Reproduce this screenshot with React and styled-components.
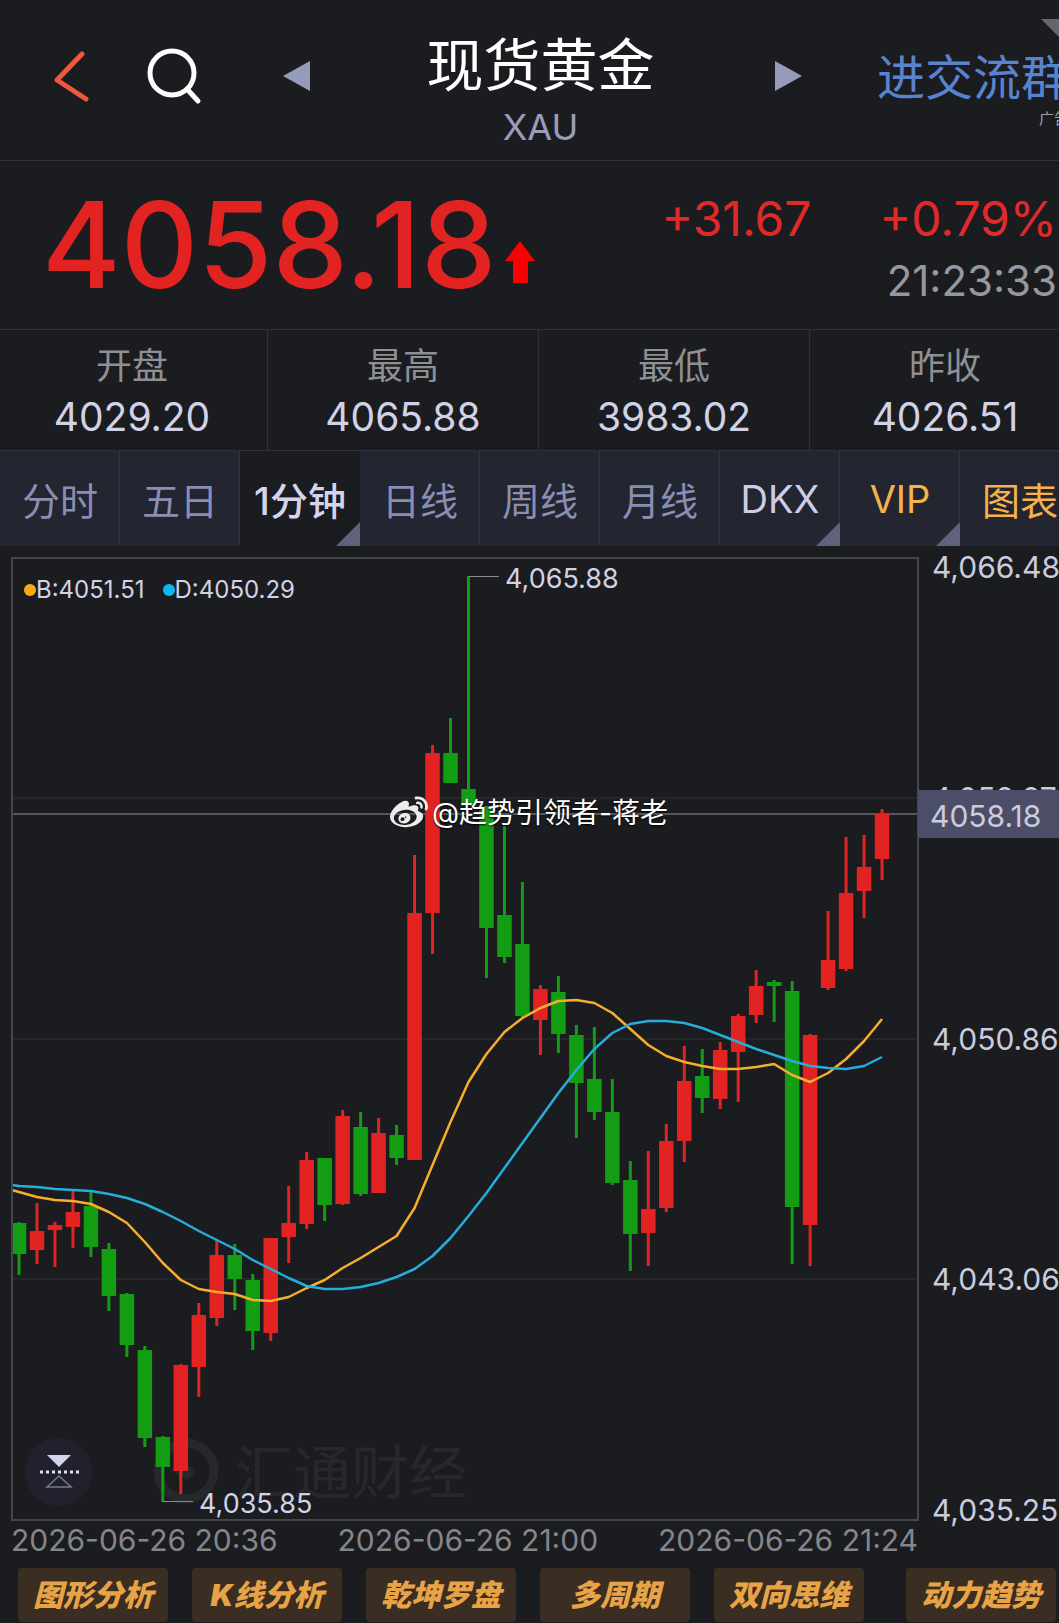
import React, { useState } from 'react';
import styled, { createGlobalStyle } from 'styled-components';
import { FaWeibo } from 'react-icons/fa';

const stats = [
  { label: '开盘', value: '4029.20' },
  { label: '最高', value: '4065.88' },
  { label: '最低', value: '3983.02' },
  { label: '昨收', value: '4026.51' },
];

const tabs = [
  { name: '分时' },
  { name: '五日' },
  { name: '1分钟', more: true },
  { name: '日线' },
  { name: '周线' },
  { name: '月线' },
  { name: 'DKX', more: true, color: '#cdcde6' },
  { name: 'VIP', more: true, color: '#f6b24c' },
  { name: '图表', color: '#f6b24c' },
];

const tools = ['图形分析', 'K线分析', '乾坤罗盘', '多周期', '双向思维', '动力趋势'];

const ticks = [
  { label: '4,066.48', y: 567 },
  { label: '4,058.67', y: 798, line: true },
  { label: '4,050.86', y: 1039, line: true },
  { label: '4,043.06', y: 1279, line: true },
  { label: '4,035.25', y: 1510 },
];

/* [up, high, body top, body bottom, low] */
const candles = [
  [0, 1222, 1223, 1254, 1275],
  [1, 1203, 1231, 1250, 1264],
  [1, 1222, 1225, 1230, 1267],
  [1, 1191, 1212, 1227, 1248],
  [0, 1192, 1206, 1247, 1257],
  [0, 1243, 1249, 1296, 1311],
  [0, 1293, 1294, 1345, 1357],
  [0, 1346, 1350, 1438, 1447],
  [0, 1436, 1437, 1467, 1502],
  [1, 1364, 1365, 1471, 1494],
  [1, 1303, 1315, 1367, 1397],
  [1, 1239, 1255, 1318, 1326],
  [0, 1244, 1255, 1279, 1310],
  [0, 1274, 1280, 1331, 1350],
  [1, 1238, 1238, 1333, 1341],
  [1, 1186, 1223, 1237, 1263],
  [1, 1152, 1160, 1224, 1229],
  [0, 1158, 1158, 1205, 1221],
  [1, 1110, 1116, 1204, 1205],
  [0, 1112, 1127, 1194, 1196],
  [1, 1118, 1133, 1193, 1193],
  [0, 1125, 1135, 1158, 1165],
  [1, 855, 913, 1160, 1160],
  [1, 745, 753, 913, 954],
  [0, 718, 753, 783, 783],
  [0, 576, 789, 806, 806],
  [0, 806, 807, 928, 978],
  [0, 826, 915, 957, 963],
  [0, 882, 944, 1016, 1017],
  [1, 985, 989, 1020, 1055],
  [0, 976, 992, 1034, 1053],
  [0, 1025, 1035, 1083, 1138],
  [0, 1027, 1079, 1112, 1120],
  [0, 1079, 1112, 1183, 1185],
  [0, 1161, 1180, 1234, 1271],
  [1, 1151, 1209, 1233, 1266],
  [1, 1124, 1141, 1208, 1212],
  [1, 1046, 1081, 1141, 1162],
  [0, 1049, 1076, 1098, 1113],
  [1, 1042, 1050, 1099, 1109],
  [1, 1014, 1016, 1052, 1102],
  [1, 970, 986, 1015, 1023],
  [0, 980, 982, 986, 1022],
  [0, 981, 991, 1207, 1264],
  [1, 1034, 1035, 1225, 1266],
  [1, 911, 960, 988, 990],
  [1, 837, 893, 969, 971],
  [1, 835, 867, 891, 918],
  [1, 809, 814, 859, 880],
];

const lineB = [
  1192, 1197, 1200, 1201, 1204, 1212, 1223, 1242, 1263, 1280, 1289, 1292, 1294,
  1300, 1301, 1297, 1288, 1280, 1268, 1258, 1247, 1236, 1208, 1165, 1122, 1082,
  1054, 1032, 1018, 1008, 1001, 1000, 1003, 1013, 1029, 1045, 1056, 1062, 1066,
  1069, 1069, 1067, 1064, 1075, 1082, 1073, 1059, 1041, 1019,
];

const lineD = [
  1186, 1187, 1189, 1190, 1191, 1194, 1198, 1204, 1212, 1221, 1231, 1240, 1249,
  1260, 1269, 1278, 1286, 1289, 1289, 1287, 1283, 1277, 1269, 1256, 1238, 1216,
  1193, 1168, 1143, 1118, 1093, 1070, 1049, 1033, 1024, 1021, 1021, 1023, 1028,
  1035, 1042, 1049, 1055, 1061, 1066, 1068, 1069, 1066, 1057,
];

const STEP = 17.98;
const getX = index => 19 + index * STEP;
const getPoints = (line, startY) =>
  `12,${startY} ${line.map((y, i) => `${getX(i)},${y}`).join(' ')}`;

const PriceChart = () => (
  <ChartSvg viewBox="11 557 1048 964" role="img" aria-label="XAU 1分钟">
    <g stroke="#303135" strokeWidth="1">
      {ticks
        .filter(tick => tick.line)
        .map(tick => (
          <line key={tick.label} x1="13" x2="917" y1={tick.y} y2={tick.y} />
        ))}
    </g>
    {/* 背景水印 */}
    <g>
      <circle cx="186" cy="1471" r="28" fill="none" stroke="#27282c" strokeWidth="9" />
      <path d="M170 1470l14-9 12 10-9 9z" fill="#27282c" />
      <Brand x="235" y="1494">
        汇通财经
      </Brand>
    </g>
    <line x1="13" x2="917" y1="814" y2="814" stroke="#55565b" strokeWidth="2" />
    {candles.map(([up, high, top, bottom, low], i) => (
      <g key={getX(i)} fill={up ? '#e32322' : '#129d12'}>
        <rect x={getX(i) - 1.5} y={high} width="3" height={low - high} />
        <rect x={getX(i) - 7.25} y={top} width="14.5" height={bottom - top} />
      </g>
    ))}
    <g fill="none" strokeWidth="2.5" strokeLinejoin="round">
      <polyline points={getPoints(lineB, 1190)} stroke="#f8ae2b" />
      <polyline points={getPoints(lineD, 1185)} stroke="#25aedb" />
    </g>
    <g stroke="#8b8c92" strokeWidth="1">
      <line x1="469" x2="499" y1="576.5" y2="576.5" />
      <line x1="163" x2="193" y1="1501.5" y2="1501.5" />
    </g>
    <Callout x="505" y="588">
      4,065.88
    </Callout>
    <Callout x="199" y="1513">
      4,035.85
    </Callout>
    <rect x="12" y="558" width="906" height="962" fill="none" stroke="#45464b" strokeWidth="2" />
    {ticks.map(tick => (
      <AxisText key={tick.label} x="932" y={tick.y + 11}>
        {tick.label}
      </AxisText>
    ))}
    <rect x="918" y="790" width="141" height="48" fill="#4b4e66" />
    <AxisText x="930" y="827">
      4058.18
    </AxisText>
  </ChartSvg>
);

const App = () => {
  const [active, setActive] = useState('1分钟');

  return (
    <>
      <GlobalStyle />
      <Page>
        <Header>
          <HeaderLeft>
            <BackButton aria-label="返回">
              <svg width="40" height="62" viewBox="0 0 40 62">
                <path
                  d="M33 9L8 35L37 54"
                  fill="none"
                  stroke="#f0573c"
                  strokeWidth="5"
                  strokeLinecap="round"
                  strokeLinejoin="round"
                />
              </svg>
            </BackButton>
            <SearchButton aria-label="搜索">
              <svg width="60" height="60" viewBox="0 0 60 60" fill="none" stroke="#fff" strokeWidth="5">
                <circle cx="27" cy="27" r="22" />
                <path d="M42 43L53 55" strokeLinecap="round" />
              </svg>
            </SearchButton>
            <IconButton aria-label="上一个">
              <svg width="28" height="32" viewBox="0 0 28 32">
                <path d="M0 16L27 1V31Z" fill="#969bbb" />
              </svg>
            </IconButton>
          </HeaderLeft>
          <TitleBox>
            <Title>现货黄金</Title>
            <Code>XAU</Code>
          </TitleBox>
          <HeaderRight>
            <IconButton aria-label="下一个">
              <svg width="28" height="32" viewBox="0 0 28 32">
                <path d="M27 16L0 1V31Z" fill="#969bbb" />
              </svg>
            </IconButton>
            <GroupLink href="#group">
              进交流群
              <AdText>广告</AdText>
            </GroupLink>
          </HeaderRight>
          <Corner />
        </Header>

        <Quote>
          <Price>
            4058.18
            <svg width="30" height="44" viewBox="0 0 30 44">
              <path d="M15 0L30 20H23V42H8V20H0Z" fill="#fb0000" />
            </svg>
          </Price>
          <Change>+31.67</Change>
          <ChangeBox>
            <Change>+0.79%</Change>
            <Time>21:23:33</Time>
          </ChangeBox>
        </Quote>

        <Stats>
          {stats.map(stat => (
            <Stat key={stat.label}>
              <StatLabel>{stat.label}</StatLabel>
              <StatValue>{stat.value}</StatValue>
            </Stat>
          ))}
        </Stats>

        <Tabs>
          {tabs.map(tab => (
            <Tab
              key={tab.name}
              $active={tab.name === active}
              $more={tab.more}
              $color={tab.color}
              onClick={() => setActive(tab.name)}
            >
              {tab.name}
            </Tab>
          ))}
        </Tabs>

        <ChartWrap>
          <PriceChart />
          <Legend>
            <LegendItem $color="#fbab10">B:4051.51</LegendItem>
            <LegendItem $color="#0fb7f2">D:4050.29</LegendItem>
          </Legend>
          <Author>
            <FaWeibo size={38} />
            @趋势引领者-蒋老
          </Author>
          <FoldButton aria-label="展开副图">
            <svg width="40" height="36" viewBox="0 0 40 36">
              <path d="M8 1H32L20 13Z" fill="#d3d3ec" />
              <path d="M1 18H40" stroke="#e2e2f2" strokeWidth="3" strokeDasharray="3 3" />
              <path d="M20 22L32 33H8Z" fill="none" stroke="#77788a" strokeWidth="1.5" />
            </svg>
          </FoldButton>
        </ChartWrap>

        <Dates>
          <span>2026-06-26 20:36</span>
          <span>2026-06-26 21:00</span>
          <span>2026-06-26 21:24</span>
        </Dates>

        <Tools>
          {tools.map(tool => (
            <Tool key={tool}>{tool}</Tool>
          ))}
        </Tools>
      </Page>
    </>
  );
};

const GlobalStyle = createGlobalStyle`
  * {
    box-sizing: border-box;
  }
  body {
    margin: 0;
    background-color: #1b1c20;
    font-family: Inter, 'Noto Sans CJK SC', sans-serif;
  }
  h1, p {
    margin: 0;
    font-weight: 400;
  }
  svg {
    display: block;
  }
`;
const BaseButton = styled.button`
  padding: 0;
  border: 0;
  background: none;
  font-family: inherit;
  cursor: pointer;
`;
const Page = styled.div`
  width: 100%;
  overflow: hidden;
  color: #d2d2e6;
`;
const Header = styled.header`
  position: relative;
  display: grid;
  grid-template-columns: 1fr auto 1fr;
  height: 161px;
  margin-right: -22px;
  border-bottom: 1px solid #303136;
`;
const HeaderLeft = styled.div`
  display: flex;
  align-items: flex-start;
  padding: 45px 0 0 49px;
`;
const HeaderRight = styled.div`
  display: flex;
  align-items: flex-start;
  justify-content: flex-end;
  gap: 74px;
  padding: 45px 12px 0 0;
`;
const IconButton = styled(BaseButton)`
  display: flex;
  align-items: center;
  flex-shrink: 0;
  height: 62px;
`;
const BackButton = styled(IconButton)`
  margin-right: 56px;
`;
const SearchButton = styled(IconButton)`
  margin-right: 78px;
`;
const TitleBox = styled.div`
  padding-top: 32px;
  text-align: center;
`;
const Title = styled.h1`
  font-size: 57px;
  line-height: 68px;
  color: #fff;
`;
const Code = styled.p`
  font-size: 36px;
  line-height: 54px;
  color: #9b9cb8;
`;
const GroupLink = styled.a`
  display: flex;
  flex-direction: column;
  align-items: flex-end;
  font-size: 48px;
  line-height: 66px;
  white-space: nowrap;
  color: #5a83cf;
  text-decoration: none;
`;
const AdText = styled.span`
  font-size: 15px;
  line-height: 16px;
  color: #9b9cb0;
`;
const Corner = styled.i`
  position: absolute;
  top: 19px;
  right: 0;
  width: 40px;
  height: 40px;
  background-color: #66676c;
  clip-path: polygon(0 0, 100% 0, 100% 100%);
`;
const Quote = styled.section`
  display: flex;
  align-items: flex-start;
  height: 168px;
  padding: 26px 2px 0 42px;
`;
const Price = styled.p`
  display: flex;
  align-items: flex-end;
  gap: 9px;
  flex: 1;
  font-size: 120px;
  font-weight: 500;
  line-height: 116px;
  color: #e32322;
  svg {
    margin-bottom: 18px;
  }
`;
const Change = styled.p`
  font-size: 48px;
  line-height: 64px;
  color: #e02a2a;
`;
const ChangeBox = styled.div`
  margin-left: 68px;
  text-align: right;
`;
const Time = styled.p`
  font-size: 42px;
  line-height: 60px;
  color: #97989d;
`;
const Stats = styled.section`
  display: grid;
  grid-template-columns: repeat(4, 1fr);
  margin: 0 -22px 0 -3px;
  border-top: 1px solid #303136;
`;
const Stat = styled.div`
  height: 120px;
  padding-top: 12px;
  border-right: 1px solid #303136;
  text-align: center;
`;
const StatLabel = styled.p`
  font-size: 36px;
  line-height: 48px;
  color: #8f9094;
`;
const StatValue = styled.p`
  font-size: 39px;
  line-height: 54px;
`;
const Tabs = styled.nav`
  display: flex;
  border-top: 1px solid #303136;
`;
const Tab = styled(BaseButton)`
  position: relative;
  flex: 0 0 120px;
  height: 95px;
  font-size: 38px;
  font-weight: ${props => (props.$active ? 500 : 400)};
  white-space: nowrap;
  color: ${props => (props.$active ? '#d4d4ec' : props.$color || '#8a8eb2')};
  background-color: ${props => (props.$active ? '#1b1c20' : '#232531')};
  box-shadow: ${props => (props.$active ? 'none' : 'inset -1px 0 #30323f')};
  &::after {
    content: '';
    display: ${props => (props.$more ? 'block' : 'none')};
    position: absolute;
    right: 0;
    bottom: 0;
    width: 24px;
    height: 24px;
    background-color: #5f617d;
    clip-path: polygon(100% 0, 100% 100%, 0 100%);
  }
`;
const ChartWrap = styled.section`
  position: relative;
  padding: 11px 0 0 11px;
`;
const ChartSvg = styled.svg`
  width: 100%;
  height: auto;
  overflow: visible;
`;
const Brand = styled.text`
  font-size: 58px;
  fill: #27282c;
`;
const Callout = styled.text`
  font-size: 27px;
  fill: #d2d2e6;
`;
const AxisText = styled.text`
  font-size: 30px;
  fill: #cbcbdf;
`;
const Legend = styled.div`
  position: absolute;
  top: 29px;
  left: 24px;
  display: flex;
  gap: 18px;
  font-size: 24px;
  line-height: 30px;
`;
const LegendItem = styled.span`
  display: flex;
  align-items: center;
  &::before {
    content: '';
    width: 12px;
    height: 12px;
    border-radius: 50%;
    background-color: ${props => props.$color};
  }
`;
const Author = styled.div`
  position: absolute;
  top: 247px;
  left: 390px;
  display: flex;
  align-items: center;
  gap: 4px;
  font-size: 28px;
  line-height: 40px;
  white-space: nowrap;
  color: #fff;
  text-shadow: 0 1px 2px #000;
  svg {
    color: #ececec;
  }
`;
const FoldButton = styled(BaseButton)`
  position: absolute;
  bottom: 15px;
  left: 25px;
  display: flex;
  align-items: center;
  justify-content: center;
  width: 68px;
  height: 68px;
  border-radius: 50%;
  background-color: #20212d;
`;
const Dates = styled.div`
  display: flex;
  justify-content: space-between;
  margin: 0 141px 0 11px;
  font-size: 30px;
  line-height: 38px;
  color: #85868b;
`;
const Tools = styled.div`
  display: flex;
  gap: 24px;
  padding: 9px 3px 1px 18px;
`;
const Tool = styled(BaseButton)`
  flex: 0 0 150px;
  height: 54px;
  padding-bottom: 4px;
  border-radius: 4px;
  font-size: 30px;
  font-weight: 900;
  font-style: italic;
  color: #e9a347;
  background-color: #3a2e22;
  &:last-child {
    margin-left: auto;
  }
`;

export default App;
